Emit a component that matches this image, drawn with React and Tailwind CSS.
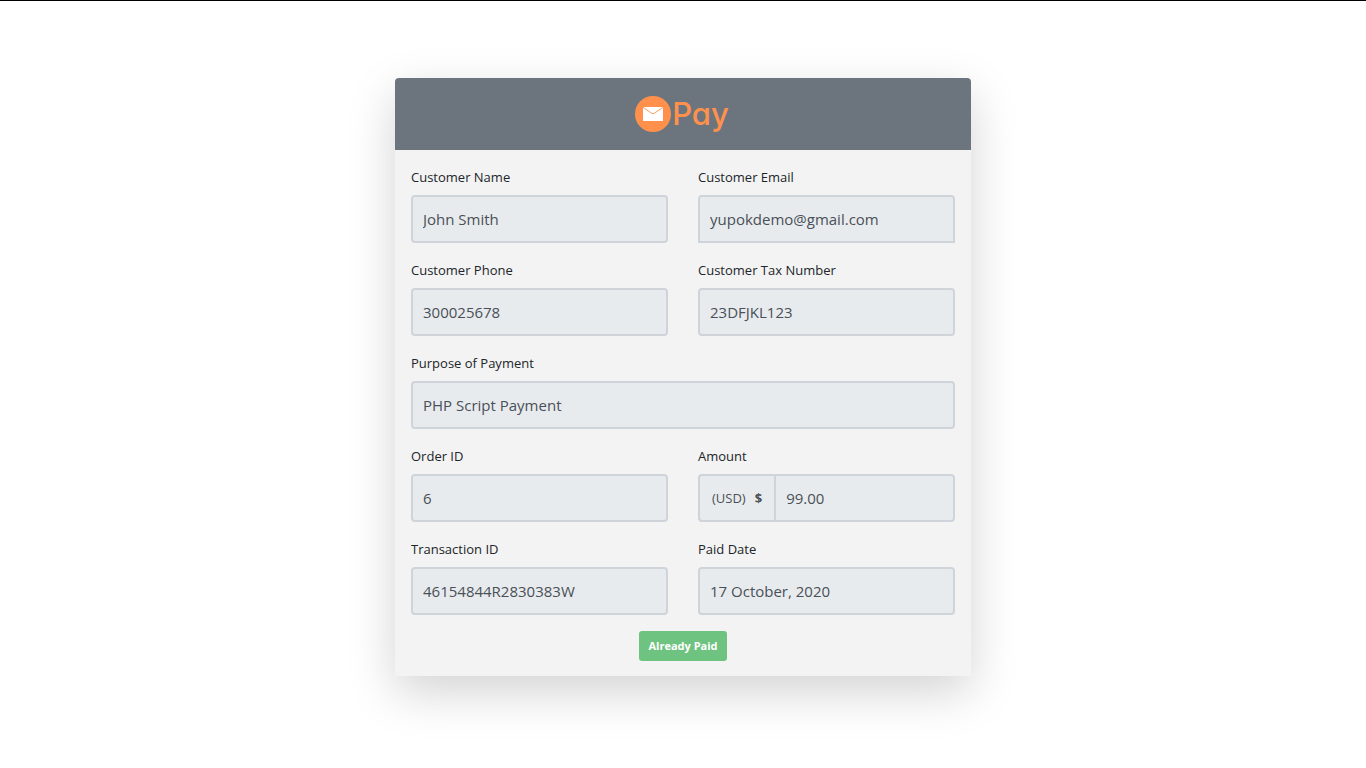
import React from "react";

const inputBase =
  "block h-12 w-full min-w-0 border-2 border-[#ced4da] bg-[#e8ebee] px-2.5 text-[15px] text-[#495057] outline-none";
const labelBase = "mb-1.5 block text-[13px] leading-[23px] text-[#212529]";

function Field({ id, label, value, type = "text", shape = "rounded", wide = false }) {
  return (
    <div className={wide ? "sm:col-span-2" : ""}>
      <label htmlFor={id} className={labelBase}>
        {label}
      </label>
      <input id={id} type={type} readOnly defaultValue={value} className={`${inputBase} ${shape}`} />
    </div>
  );
}

function Logo() {
  return (
    <div className="flex items-center gap-px pr-0.5 text-[#ff914d]">
      <svg viewBox="0 0 36 36" className="size-9" aria-hidden="true">
        <circle cx="18" cy="18" r="18" fill="currentColor" />
        <rect x="8" y="11" width="20" height="14" fill="#fff" />
        <path d="M8 11.3 L16.8 17.3 Q18 18.1 19.2 17.3 L28 11.3" fill="none" stroke="currentColor" strokeWidth="0.9" />
      </svg>
      <span className="font-['Inter',sans-serif] text-[31px] leading-9 font-medium [font-feature-settings:'cv11']">Pay</span>
    </div>
  );
}

export default function App() {
  return (
    <div className="min-h-screen border-t border-black bg-white px-4 pt-[77px] pb-12 font-['Open_Sans','Noto_Sans',sans-serif]">
      <main className="mx-auto max-w-xl rounded-t bg-[#f3f3f3] shadow-[0_16px_48px_rgba(0,0,0,0.175)]">
        <header className="flex h-[72px] items-center justify-center rounded-t bg-[#6c757d]">
          <Logo />
        </header>
        <form className="px-4 pt-4 pb-[15px]">
          <div className="grid grid-cols-1 gap-x-[30px] gap-y-4 sm:grid-cols-2">
            <Field id="name" label="Customer Name" value="John Smith" />
            <Field id="email" label="Customer Email" type="email" value="yupokdemo@gmail.com" shape="rounded-t" />
            <Field id="phone" label="Customer Phone" type="tel" value="300025678" />
            <Field id="tax" label="Customer Tax Number" value="23DFJKL123" />
            <Field id="purpose" label="Purpose of Payment" value="PHP Script Payment" wide />
            <Field id="order" label="Order ID" value="6" />
            <div>
              <label htmlFor="amount" className={labelBase}>
                Amount
              </label>
              <div className="flex">
                <span className="flex h-12 shrink-0 items-center gap-[9px] rounded-l border-2 border-r-0 border-[#ced4da] bg-[#e8ebee] px-3 text-[13px] leading-[23px] text-[#495057]">
                  (USD) <b>$</b>
                </span>
                <input id="amount" type="text" readOnly defaultValue="99.00" className={`${inputBase} flex-1 rounded-r`} />
              </div>
            </div>
            <Field id="transaction" label="Transaction ID" value="46154844R2830383W" />
            <Field id="date" label="Paid Date" value="17 October, 2020" />
          </div>
          <div className="mt-4 flex justify-center">
            <button type="button" disabled className="h-[30px] rounded-[3px] bg-[#6fc381] px-[9px] text-[11px] font-bold text-white">
              Already Paid
            </button>
          </div>
        </form>
      </main>
    </div>
  );
}
